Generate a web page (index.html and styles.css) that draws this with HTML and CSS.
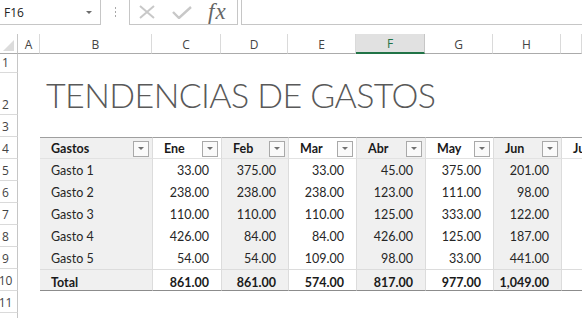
FILE: index.html
```html
<!DOCTYPE html>
<html lang="es">
<head>
  <meta charset="UTF-8" />
  <title>Tendencias de gastos</title>
  <link rel="stylesheet" href="styles.css">
</head>
<body>
  <div class="formula-bar">
    <div class="name-box">F16 <span class="caret"></span></div>
    <div class="grip">
      <svg width="3" height="10" viewBox="0 0 3 10"><rect x="1" y="0" width="1" height="2" fill="#a8a8a8"/><rect x="1" y="4" width="1" height="2" fill="#a8a8a8"/><rect x="1" y="8" width="1" height="2" fill="#a8a8a8"/></svg>
    </div>
    <div class="fx-tools">
      <svg class="ico" width="16" height="14" viewBox="0 0 16 14"><path d="M1 1 L15 13 M15 1 L1 13" stroke="#c8c8c8" stroke-width="2" fill="none"/></svg>
      <svg class="ico" width="20" height="13" viewBox="0 0 20 13"><path d="M1 6 L7 12 L19 1" stroke="#c8c8c8" stroke-width="2.4" fill="none"/></svg>
      <span class="fx">fx</span>
    </div>
    <div class="formula-input"></div>
  </div>

  <div class="sheet">
    <div class="row col-head">
      <div class="corner"><span class="tri"></span></div>
      <div class="ch">A</div><div class="ch">B</div><div class="ch">C</div><div class="ch">D</div>
      <div class="ch">E</div><div class="ch active">F</div><div class="ch">G</div><div class="ch">H</div><div class="ch"></div>
    </div>

    <div class="row"><div class="rh">1</div></div>
    <div class="row tall">
      <div class="rh">2</div><div></div>
      <div class="title">TENDENCIAS DE GASTOS</div>
    </div>
    <div class="row"><div class="rh">3</div></div>

    <div class="row head">
      <div class="rh">4</div><div></div>
      <div class="c band">Gastos<span class="filter"></span></div>
      <div class="c sep">Ene<span class="filter"></span></div>
      <div class="c band sep">Feb<span class="filter"></span></div>
      <div class="c sep">Mar<span class="filter"></span></div>
      <div class="c band sep">Abr<span class="filter"></span></div>
      <div class="c sep">May<span class="filter"></span></div>
      <div class="c band sep">Jun<span class="filter"></span></div>
      <div class="c sep">Jul</div>
    </div>

    <div class="row">
      <div class="rh">5</div><div></div>
      <div class="c band">Gasto 1</div>
      <div class="c num sep">33.00</div>
      <div class="c num band sep">375.00</div>
      <div class="c num sep">33.00</div>
      <div class="c num band sep">45.00</div>
      <div class="c num sep">375.00</div>
      <div class="c num band sep">201.00</div>
      <div class="c sep"></div>
    </div>
    <div class="row">
      <div class="rh">6</div><div></div>
      <div class="c band">Gasto 2</div>
      <div class="c num sep">238.00</div>
      <div class="c num band sep">238.00</div>
      <div class="c num sep">238.00</div>
      <div class="c num band sep">123.00</div>
      <div class="c num sep">111.00</div>
      <div class="c num band sep">98.00</div>
      <div class="c sep"></div>
    </div>
    <div class="row">
      <div class="rh">7</div><div></div>
      <div class="c band">Gasto 3</div>
      <div class="c num sep">110.00</div>
      <div class="c num band sep">110.00</div>
      <div class="c num sep">110.00</div>
      <div class="c num band sep">125.00</div>
      <div class="c num sep">333.00</div>
      <div class="c num band sep">122.00</div>
      <div class="c sep"></div>
    </div>
    <div class="row">
      <div class="rh">8</div><div></div>
      <div class="c band">Gasto 4</div>
      <div class="c num sep">426.00</div>
      <div class="c num band sep">84.00</div>
      <div class="c num sep">84.00</div>
      <div class="c num band sep">426.00</div>
      <div class="c num sep">125.00</div>
      <div class="c num band sep">187.00</div>
      <div class="c sep"></div>
    </div>
    <div class="row">
      <div class="rh">9</div><div></div>
      <div class="c band">Gasto 5</div>
      <div class="c num sep">54.00</div>
      <div class="c num band sep">54.00</div>
      <div class="c num sep">109.00</div>
      <div class="c num band sep">98.00</div>
      <div class="c num sep">33.00</div>
      <div class="c num band sep">441.00</div>
      <div class="c sep"></div>
    </div>

    <div class="row total">
      <div class="rh">10</div><div></div>
      <div class="c band">Total</div>
      <div class="c num sep">861.00</div>
      <div class="c num band sep">861.00</div>
      <div class="c num sep">574.00</div>
      <div class="c num band sep">817.00</div>
      <div class="c num sep">977.00</div>
      <div class="c num band sep">1,049.00</div>
      <div class="c sep"></div>
    </div>

    <div class="row"><div class="rh">11</div></div>
    <div class="row"><div class="rh"></div></div>
  </div>
</body>
</html>
```

FILE: styles.css
```css
body {
  margin: 0;
  background: #fff;
  overflow: hidden;
  font-family: 'Open Sans', 'Noto Sans', sans-serif;
}

/* formula bar */

.formula-bar {
  display: flex;
  height: 25px;
  margin-bottom: 9px;
}

.name-box {
  width: 96px;
  padding-left: 4px;
  border-right: 1px solid #c6c6c6;
  border-bottom: 1px solid #c6c6c6;
  display: flex;
  align-items: center;
  font-size: 12px;
  color: #222;
}

.caret {
  margin-left: auto;
  margin-right: 8px;
  width: 0;
  height: 0;
  border-left: 3px solid transparent;
  border-right: 3px solid transparent;
  border-top: 3px solid #6d6d6d;
}

.grip {
  width: 28px;
  display: flex;
  align-items: center;
  justify-content: center;
  padding-bottom: 2px;
}

.fx-tools {
  width: 109px;
  border-left: 1px solid #c6c6c6;
  border-right: 1px solid #c6c6c6;
  border-bottom: 1px solid #c6c6c6;
  display: flex;
  align-items: center;
  padding-left: 9px;
  box-sizing: border-box;
}

.fx-tools .ico:first-child {
  margin-right: 17px;
}

.fx-tools .ico + .ico {
  margin-right: 13px;
}

.fx {
  font-family: 'Liberation Serif', 'DejaVu Serif', serif;
  font-style: italic;
  font-size: 23px;
  line-height: 24px;
  color: #666;
  letter-spacing: 1px;
  padding: 0 3px;
}

.formula-input {
  flex: 1;
  margin-left: 3px;
  border-left: 1px solid #c6c6c6;
  border-bottom: 1px solid #c6c6c6;
}

/* sheet grid */

.sheet {
  --cols: 18px 22px 112px 69px 67px 68px 69px 68px 68px 1fr;
}

.row {
  display: grid;
  grid-template-columns: var(--cols);
  height: 22px;
}

.row.tall {
  height: 42px;
}

.row > div {
  box-sizing: border-box;
  min-width: 0;
}

.col-head {
  height: 17px;
}

.corner {
  border-right: 1px solid #c6c6c6;
  border-bottom: 1px solid #ababab;
  position: relative;
}

.corner .tri {
  position: absolute;
  right: 3px;
  bottom: 2px;
  width: 0;
  height: 0;
  border-left: 11px solid transparent;
  border-bottom: 11px solid #dcdcdc;
}

.ch {
  border-right: 1px solid #dadada;
  border-bottom: 1px solid #ababab;
  font-size: 12px;
  color: #444;
  display: flex;
  align-items: center;
  justify-content: center;
  padding-top: 1px;
}

.ch.active {
  background: #e1e1e1;
  color: #217346;
  border-bottom: 2px solid #217346;
  border-right-color: #c6c6c6;
}

.rh {
  grid-column: 1;
  border-right: 1px solid #c6c6c6;
  border-bottom: 1px solid #dadada;
  font-size: 12px;
  line-height: 14px;
  color: #444;
  display: flex;
  align-items: flex-end;
  justify-content: center;
  padding: 0 6px 2px 0;
  white-space: nowrap;
}

.title {
  grid-column: 3 / -1;
  font-family: Lato, 'Open Sans', sans-serif;
  font-weight: 300;
  font-size: 34px;
  line-height: 40px;
  letter-spacing: -0.6px;
  color: #595959;
  padding-left: 6px;
  display: flex;
  align-items: flex-end;
  white-space: nowrap;
}

/* table */

.c {
  display: flex;
  align-items: center;
  padding: 1px 12px 0 11px;
  font-family: Lato, 'Open Sans', sans-serif;
  font-size: 12.5px;
  color: #262626;
  white-space: nowrap;
  overflow: hidden;
}

.c.num {
  justify-content: flex-end;
}

.c.band {
  background: #f0f0f0;
}

.c.sep {
  border-left: 1px solid #dcdcdc;
}

.head .c {
  border-top: 1px solid #9f9f9f;
  border-bottom: 1px solid #e2e2e2;
  font-weight: bold;
  color: #1a1a1a;
  padding-right: 3px;
}

.total .c {
  border-top: 1px solid #dcdcdc;
  border-bottom: 1px solid #8c8c8c;
  padding-top: 4px;
  font-weight: bold;
  color: #1a1a1a;
}

.filter {
  margin-left: auto;
  width: 16px;
  height: 16px;
  box-sizing: border-box;
  border: 1px solid #a9a9a9;
  background: #fafafa;
  display: flex;
  align-items: center;
  justify-content: center;
}

.filter::after {
  content: "";
  width: 0;
  height: 0;
  border-left: 3px solid transparent;
  border-right: 3px solid transparent;
  border-top: 3px solid #707070;
}
```
